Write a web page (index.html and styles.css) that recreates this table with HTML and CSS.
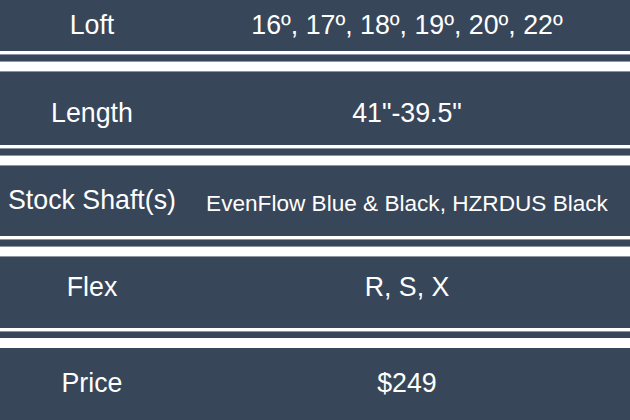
FILE: index.html
```html
<!DOCTYPE html>
<html>
<head>
<meta charset="utf-8">
<link rel="stylesheet" href="styles.css">
</head>
<body>
<div class="table">
  <div class="row r1"><div class="label">Loft</div><div class="value">16º, 17º, 18º, 19º, 20º, 22º</div></div>
  <div class="sep"><div class="sa"></div><div class="sb"></div><div class="sc"></div></div>
  <div class="row r2"><div class="label">Length</div><div class="value">41"-39.5"</div></div>
  <div class="sep"><div class="sa"></div><div class="sb"></div><div class="sc"></div></div>
  <div class="row r3"><div class="label">Stock Shaft(s)</div><div class="value small">EvenFlow Blue &amp; Black, HZRDUS Black</div></div>
  <div class="sep"><div class="sa"></div><div class="sb"></div><div class="sc"></div></div>
  <div class="row r4"><div class="label">Flex</div><div class="value">R, S, X</div></div>
  <div class="sep last"><div class="sa"></div><div class="sb"></div><div class="sc"></div></div>
  <div class="row r5"><div class="label">Price</div><div class="value">$249</div></div>
</div>
</body>
</html>
```
FILE: styles.css
```css
html, body {
  margin: 0;
  padding: 0;
  background: #ffffff;
}
.table {
  width: 630px;
  height: 420px;
  overflow: hidden;
  font-family: "Liberation Sans", Arial, sans-serif;
  color: #ffffff;
}
.row {
  display: grid;
  grid-template-columns: 184px 1fr;
  align-items: center;
  background: #384659;
  box-sizing: border-box;
  font-size: 26.75px;
}
.label, .value {
  text-align: center;
  white-space: nowrap;
}
.value.small {
  font-size: 22.6px;
  padding-top: 7px;
}
.r1 { height: 51px; }
.r2 { height: 73px; padding-top: 9px; }
.r3 { height: 70px; padding-bottom: 1px; }
.r4 { height: 71px; padding-bottom: 10px; }
.r5 { height: 72px; padding-bottom: 2px; }
.sep {
  display: flex;
  flex-direction: column;
}
.sa {
  height: 3px;
  background: #ffffff;
  border-bottom: 1px solid #8c95a1;
}
.sb {
  height: 6px;
  background: #384659;
  border-bottom: 1px solid #8c95a1;
}
.sc {
  height: 9px;
  background: #ffffff;
  border-bottom: 1px solid #8c95a1;
}
.last .sb { border-bottom: none; }
.last .sc { height: 10px; border-bottom: none; }
```
